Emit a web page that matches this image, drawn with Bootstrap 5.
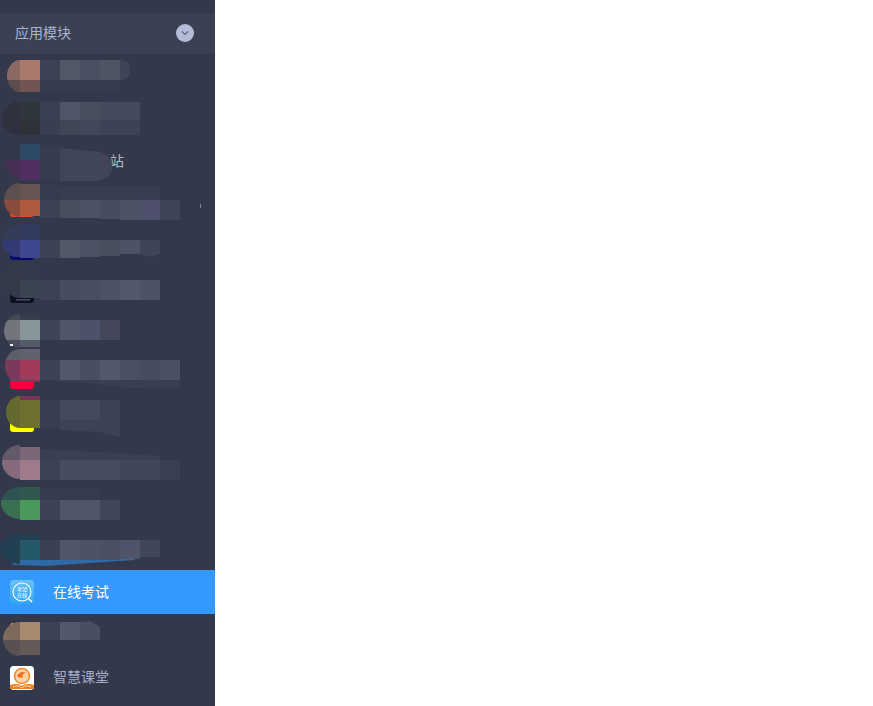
<!DOCTYPE html>
<html lang="zh">
<head>
<meta charset="utf-8">
<title>应用模块</title>
<link href="https://cdn.jsdelivr.net/npm/bootstrap@5.3.0/dist/css/bootstrap.min.css" rel="stylesheet">
<style>
html,body{height:100%;overflow:hidden;background:#fff}
body{font-family:"Noto Sans CJK SC","Liberation Sans",sans-serif;font-size:14px}
.side-panel{width:215px;height:706px;background:#33394b;padding-top:13px;flex:none}
.side-head{height:41px;background:#3b4052;color:#a9b2d2;padding:0 21px 2px 15px}
.side-toggle{width:18px;height:18px;border-radius:50%;background:#b5bcd9}
.side-item{height:43px;color:#a6abc6;padding-left:10px;gap:19px}
.side-item.is-active{height:44px;background:#3399ff;color:#fff}
.side-item.is-tight{height:42px}
.app-tile{width:24px;height:24px;border-radius:3px;flex:none;display:block}
.app-tile.tile-low{margin-top:2px}
.item-label{margin-top:-2px}
.tile-plain{background:#33394b}
.tile-orange{background:#e8481c}
.tile-navy{background:#060a70}
.tile-ink{background:#0c1020}
.tile-white{background:#f4f4f4}
.tile-red{background:#f5003c}
.tile-yellow{background:#ffff00}
.tile-amber{background:#f0a040}
.item-tail{margin-left:57px;color:#b4b8cc}
.blur-layer{position:absolute;left:0;top:0;width:215px;height:706px;pointer-events:none}
.tile-caption{font-family:"Noto Sans CJK SC",sans-serif;font-size:5px;fill:#fff;text-anchor:middle}
</style>
</head>
<body>
<div class="d-flex">
<aside class="side-panel position-relative">
  <div class="side-head d-flex align-items-center justify-content-between">
    <span>应用模块</span>
    <span class="side-toggle d-flex align-items-center justify-content-center">
      <svg width="10" height="6" viewBox="0 0 10 6"><path d="M2 1.500 5 4.500 8 1.500" fill="none" stroke="#5d6480" stroke-width="1.1"/></svg>
    </span>
  </div>
  <nav class="d-flex flex-column">
    <a class="side-item d-flex align-items-center text-decoration-none"><span class="app-tile tile-plain"></span></a>
    <a class="side-item d-flex align-items-center text-decoration-none"><span class="app-tile tile-plain"></span></a>
    <a class="side-item d-flex align-items-center text-decoration-none"><span class="app-tile tile-plain"></span><span class="item-tail item-label">站</span></a>
    <a class="side-item d-flex align-items-center text-decoration-none"><span class="app-tile tile-orange"></span></a>
    <a class="side-item d-flex align-items-center text-decoration-none"><span class="app-tile tile-navy"></span></a>
    <a class="side-item d-flex align-items-center text-decoration-none"><span class="app-tile tile-ink"></span></a>
    <a class="side-item d-flex align-items-center text-decoration-none"><span class="app-tile tile-white"></span></a>
    <a class="side-item d-flex align-items-center text-decoration-none"><span class="app-tile tile-red"></span></a>
    <a class="side-item d-flex align-items-center text-decoration-none"><span class="app-tile tile-yellow"></span></a>
    <a class="side-item d-flex align-items-center text-decoration-none"><span class="app-tile tile-plain"></span></a>
    <a class="side-item d-flex align-items-center text-decoration-none"><span class="app-tile tile-plain"></span></a>
    <a class="side-item d-flex align-items-center text-decoration-none"><span class="app-tile tile-plain"></span></a>
    <a class="side-item is-active d-flex align-items-center text-decoration-none">
      <svg class="app-tile" viewBox="0 0 24 24">
        <defs><linearGradient id="examBg" x1="0" y1="0" x2="0" y2="1"><stop offset="0" stop-color="#6cc2f7"/><stop offset="1" stop-color="#2ea6f2"/></linearGradient></defs>
        <rect width="24" height="24" rx="3" fill="url(#examBg)"/>
        <circle cx="12" cy="12" r="9" fill="none" stroke="#fff" stroke-width="1.1"/>
        <path d="M18.500 18.500 22 22" stroke="#fff" stroke-width="1.4"/>
        <text class="tile-caption" x="12" y="10.500">考试</text>
        <text class="tile-caption" x="12" y="17">在线</text>
      </svg>
      <span class="item-label">在线考试</span>
    </a>
    <a class="side-item is-tight d-flex align-items-center text-decoration-none"><span class="app-tile tile-amber"></span></a>
    <a class="side-item is-tight d-flex align-items-center text-decoration-none">
      <svg class="app-tile tile-low" viewBox="0 0 24 24">
        <rect width="24" height="24" rx="3" fill="#fff"/>
        <circle cx="12" cy="10" r="7.500" fill="#fbd3a8"/>
        <circle cx="12" cy="10" r="7.500" fill="none" stroke="#f08a2a" stroke-width="1.6"/>
        <path d="M7 10C9 6 13 5 16 7 13 7 12 9 13 11 11 12 9 12 7 10Z" fill="#ee6b1e"/>
        <path d="M0 19C6 17 10 18 12 20 14 18 18 17 24 19V23H0Z" fill="#f0801e"/>
        <path d="M3 21C7 19 10 20 12 22 14 20 17 19 21 21" fill="none" stroke="#fff" stroke-width=".7"/>
      </svg>
      <span class="item-label">智慧课堂</span>
    </a>
  </nav>

  <svg class="blur-layer" viewBox="0 0 215 706">
    <defs>
      <clipPath id="c1"><ellipse cx="20" cy="76" rx="13" ry="16"/></clipPath>
      <clipPath id="c2"><ellipse cx="20" cy="118.500" rx="18" ry="17"/></clipPath>
      <clipPath id="c3"><ellipse cx="20" cy="162" rx="13" ry="16"/></clipPath>
      <clipPath id="c4"><ellipse cx="20" cy="200" rx="16" ry="17"/></clipPath>
      <clipPath id="c5"><ellipse cx="20" cy="241" rx="18" ry="17"/></clipPath>
      <clipPath id="c6"><ellipse cx="20" cy="281" rx="17" ry="17"/></clipPath>
      <clipPath id="c7"><ellipse cx="20" cy="331" rx="16" ry="17"/></clipPath>
      <clipPath id="c8"><ellipse cx="20" cy="366" rx="15" ry="17"/></clipPath>
      <clipPath id="c9"><ellipse cx="20" cy="412" rx="14" ry="16"/></clipPath>
      <clipPath id="c10"><ellipse cx="20" cy="462" rx="18" ry="17"/></clipPath>
      <clipPath id="c11"><ellipse cx="20" cy="503" rx="19" ry="16"/></clipPath>
      <clipPath id="c12"><ellipse cx="20" cy="549" rx="20" ry="15"/></clipPath>
      <clipPath id="c13"><ellipse cx="20" cy="639" rx="17" ry="17"/></clipPath>
    </defs>

    <g clip-path="url(#c1)"><rect x="0" y="60" width="20" height="20" fill="#8c6a63"/><rect x="0" y="80" width="20" height="12" fill="#5f4c50"/></g>
    <rect x="20" y="60" width="20" height="20" fill="#a97a6c"/><rect x="20" y="80" width="20" height="12" fill="#725450"/>
    <rect x="112" y="60" width="18" height="20" rx="8" fill="#3e4355"/>
    <rect x="40" y="60" width="20" height="20" fill="#3c4254"/><rect x="60" y="60" width="20" height="20" fill="#535869"/><rect x="80" y="60" width="20" height="20" fill="#4a4f61"/><rect x="100" y="60" width="20" height="20" fill="#505566"/>
    <rect x="40" y="80" width="80" height="12" fill="#373c4f"/>

    <g clip-path="url(#c2)"><rect x="0" y="100" width="20" height="36" fill="#2f323e"/></g>
    <rect x="20" y="102" width="20" height="18" fill="#30363d"/><rect x="20" y="120" width="20" height="15" fill="#2f3239"/>
    <rect x="40" y="102" width="20" height="18" fill="#3a3f52"/><rect x="40" y="120" width="20" height="15" fill="#393e50"/>
    <rect x="60" y="102" width="20" height="18" fill="#505567"/><rect x="60" y="120" width="20" height="15" fill="#414657"/>
    <rect x="80" y="102" width="20" height="18" fill="#4a4f60"/><rect x="80" y="120" width="20" height="15" fill="#424759"/>
    <rect x="100" y="102" width="20" height="18" fill="#454a5c"/><rect x="100" y="120" width="20" height="15" fill="#3d4254"/>
    <rect x="120" y="102" width="20" height="18" fill="#454a5c"/><rect x="120" y="120" width="20" height="15" fill="#3d4254"/>

    <g clip-path="url(#c3)"><rect x="0" y="160" width="20" height="20" fill="#472f55"/></g>
    <rect x="20" y="144" width="20" height="16" fill="#2f4a68"/><rect x="20" y="160" width="20" height="20" fill="#4f2f5f"/>
    <rect x="40" y="146" width="20" height="34" fill="#363c4e"/>
    <path d="M60 148 100 152C108 154 112 160 112 168 112 176 106 180 96 181H60Z" fill="#404558"/>

    <rect x="60" y="186" width="100" height="14" fill="#383e50"/>
    <g clip-path="url(#c4)"><rect x="0" y="183" width="20" height="17" fill="#5d5150"/><rect x="0" y="200" width="20" height="17" fill="#8a4c3c"/></g>
    <rect x="20" y="184" width="20" height="16" fill="#665550"/><rect x="20" y="200" width="20" height="16" fill="#ad5a3e"/>
    <rect x="40" y="184" width="20" height="16" fill="#363c4e"/><rect x="40" y="200" width="20" height="18" fill="#3d4254"/>
    <rect x="60" y="200" width="20" height="18" fill="#4a4f60"/><rect x="80" y="200" width="20" height="18" fill="#4c5163"/><rect x="100" y="200" width="20" height="19" fill="#474c60"/><rect x="120" y="200" width="20" height="20" fill="#4c5163"/><rect x="140" y="200" width="20" height="20" fill="#4f506b"/><rect x="160" y="200" width="20" height="20" fill="#3f4456"/>
    <rect x="200" y="204" width="1" height="4" fill="#7d8294"/>

    <g clip-path="url(#c5)"><rect x="0" y="224" width="20" height="16" fill="#343c58"/><rect x="0" y="240" width="20" height="17" fill="#313a72"/></g>
    <rect x="20" y="224" width="20" height="16" fill="#323c5e"/><rect x="20" y="240" width="20" height="18" fill="#3e478f"/>
    <rect x="40" y="240" width="20" height="18" fill="#3d4255"/><rect x="60" y="240" width="20" height="18" fill="#535869"/><rect x="80" y="240" width="20" height="17" fill="#4c5163"/><rect x="100" y="240" width="20" height="16" fill="#4a4f60"/><rect x="120" y="240" width="20" height="14" fill="#4d5265"/><path d="M140 240H160V254L150 257 140 254Z" fill="#3f4456"/>

    <g clip-path="url(#c6)"><rect x="0" y="264" width="20" height="34" fill="#343a4a"/></g>
    <rect x="20" y="266" width="20" height="14" fill="#343a4b"/><rect x="20" y="280" width="20" height="18" fill="#3a4452"/>
    <rect x="40" y="280" width="20" height="20" fill="#3c4154"/><rect x="60" y="280" width="20" height="20" fill="#474c60"/><rect x="80" y="280" width="20" height="20" fill="#494e61"/><rect x="100" y="280" width="20" height="20" fill="#4d5265"/><rect x="120" y="280" width="20" height="20" fill="#53586c"/><rect x="140" y="280" width="20" height="20" fill="#4d5265"/>
    <rect x="16" y="299" width="14" height="1.500" fill="#4a5066"/>

    <g clip-path="url(#c7)"><rect x="0" y="314" width="20" height="6" fill="#454954"/><rect x="0" y="320" width="20" height="20" fill="#72757e"/><rect x="0" y="340" width="20" height="8" fill="#4a4e5c"/></g>
    <rect x="20" y="315" width="20" height="5" fill="#383e4e"/><rect x="20" y="320" width="20" height="20" fill="#85959a"/><rect x="20" y="340" width="20" height="7" fill="#565a66"/>
    <rect x="40" y="320" width="20" height="20" fill="#3f4456"/><rect x="60" y="320" width="20" height="20" fill="#50556a"/><rect x="80" y="320" width="20" height="20" fill="#4d5169"/><rect x="100" y="320" width="20" height="20" fill="#434759"/>
    <rect x="10" y="344" width="3" height="2" fill="#f4f4f4"/>

    <g clip-path="url(#c8)"><rect x="0" y="349" width="20" height="11" fill="#5b5f6b"/><rect x="0" y="360" width="20" height="22" fill="#7b3a5c"/></g>
    <rect x="20" y="349" width="20" height="11" fill="#60636f"/><rect x="20" y="360" width="20" height="20" fill="#a23a5a"/>
    <rect x="10" y="380" width="30" height="2" fill="#7b3a5c"/>
    <rect x="40" y="360" width="20" height="20" fill="#3d4356"/><rect x="60" y="360" width="20" height="20" fill="#53586b"/><rect x="80" y="360" width="20" height="20" fill="#494e60"/><rect x="100" y="360" width="20" height="20" fill="#53586b"/><rect x="120" y="360" width="20" height="20" fill="#4a4f62"/><rect x="140" y="360" width="20" height="20" fill="#474c5e"/><rect x="160" y="360" width="20" height="20" fill="#4b5062"/>
    <path d="M40 380H180V389L130 388 100 384Z" fill="#393f51"/>

    <rect x="20" y="396" width="20" height="4" fill="#7a3355"/>
    <g clip-path="url(#c9)"><rect x="0" y="396" width="20" height="32" fill="#65682f"/></g>
    <rect x="20" y="400" width="20" height="28" fill="#6f6f2f"/>
    <rect x="40" y="400" width="20" height="28" fill="#383e50"/><rect x="60" y="400" width="40" height="20" fill="#44495c"/><path d="M60 420H100V432L60 430Z" fill="#3d4254"/><path d="M100 400H120V437L100 432Z" fill="#3c4153"/>

    <path d="M40 449 120 453 160 456V460H40Z" fill="#3a3f52"/>
    <g clip-path="url(#c10)"><rect x="0" y="445" width="20" height="15" fill="#625a6b"/><rect x="0" y="460" width="20" height="20" fill="#856a7e"/></g>
    <rect x="20" y="447" width="20" height="13" fill="#7a6878"/><rect x="20" y="460" width="20" height="20" fill="#9e7b8b"/>
    <rect x="40" y="460" width="20" height="20" fill="#3c4154"/><rect x="60" y="460" width="60" height="20" fill="#484c61"/><rect x="120" y="460" width="40" height="20" fill="#41465a"/><rect x="160" y="460" width="20" height="20" fill="#3a3f51"/>

    <rect x="40" y="489" width="60" height="11" fill="#363c4e"/>
    <g clip-path="url(#c11)"><rect x="0" y="487" width="20" height="13" fill="#2f5350"/><rect x="0" y="500" width="20" height="20" fill="#3a7052"/></g>
    <rect x="20" y="487" width="20" height="13" fill="#30584f"/><rect x="20" y="500" width="20" height="20" fill="#4a9a5c"/>
    <rect x="40" y="500" width="20" height="20" fill="#3d4255"/><rect x="60" y="500" width="40" height="20" fill="#505569"/><rect x="100" y="500" width="20" height="20" rx="3" fill="#404558"/>

    <path d="M7 558H135V560L90 563 45 566 14 565Z" fill="#2e6aa5"/>
    <g clip-path="url(#c12)"><rect x="0" y="534" width="20" height="30" fill="#233f52"/></g>
    <rect x="20" y="534" width="20" height="6" fill="#233f52"/><rect x="20" y="540" width="20" height="20" fill="#245868"/>
    <rect x="40" y="540" width="20" height="20" fill="#3b4052"/><rect x="60" y="540" width="20" height="20" fill="#50556a"/><rect x="80" y="540" width="20" height="20" fill="#4e5266"/><rect x="100" y="540" width="20" height="20" fill="#4c5063"/><rect x="120" y="540" width="20" height="19" fill="#50546a"/><rect x="140" y="540" width="20" height="17" fill="#424659"/>

    <g clip-path="url(#c13)"><rect x="0" y="622" width="20" height="18" fill="#7d6a5c"/><rect x="0" y="640" width="20" height="16" fill="#5a5053"/></g>
    <rect x="20" y="622" width="20" height="18" fill="#a88a6c"/><rect x="20" y="640" width="20" height="15" fill="#665a58"/>
    <rect x="40" y="622" width="20" height="18" fill="#3c4254"/><rect x="60" y="622" width="20" height="18" fill="#53586b"/><path d="M80 622 90 621 100 627V640H80Z" fill="#494e60"/>
  </svg>
</aside>
<main class="flex-grow-1 bg-white"></main>
</div>
<script src="https://cdn.jsdelivr.net/npm/bootstrap@5.3.0/dist/js/bootstrap.bundle.min.js"></script>
</body>
</html>
